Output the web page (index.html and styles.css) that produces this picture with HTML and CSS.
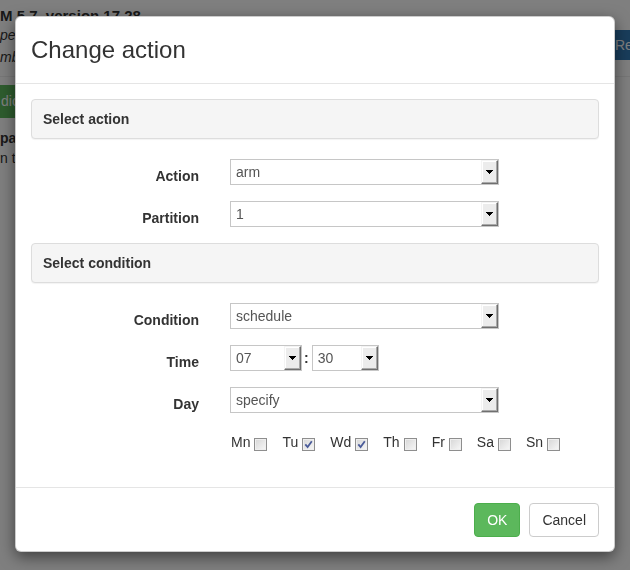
FILE: index.html
```html
<!DOCTYPE html>
<html>
<head>
<meta charset="utf-8">
<title>Change action</title>
<link rel="stylesheet" href="styles.css">
</head>
<body>
<div class="page">
  <div class="topbar">
    <div class="info">
      <div class="ver">M 5.7, version 17.28</div>
      <div class="it">per</div>
      <div class="it">mb</div>
    </div>
    <div class="refresh">Re</div>
  </div>
  <hr class="sep">
  <div class="greenbtn">dic</div>
  <div class="pa">pa</div>
  <div class="nt">n t</div>
</div>

<div class="backdrop"></div>

<div class="modal">
  <div class="modal-header">
    <h4 class="modal-title">Change action</h4>
  </div>
  <div class="modal-body">
    <div class="panel">Select action</div>

    <div class="form-row">
      <div class="label">Action</div>
      <div class="select"><span class="val">arm</span><span class="dd"><svg width="7" height="4" viewBox="0 0 7 4" shape-rendering="crispEdges"><rect x="0" y="0" width="7" height="1"/><rect x="1" y="1" width="5" height="1"/><rect x="2" y="2" width="3" height="1"/><rect x="3" y="3" width="1" height="1"/></svg></span></div>
    </div>
    <div class="form-row">
      <div class="label">Partition</div>
      <div class="select"><span class="val">1</span><span class="dd"><svg width="7" height="4" viewBox="0 0 7 4" shape-rendering="crispEdges"><rect x="0" y="0" width="7" height="1"/><rect x="1" y="1" width="5" height="1"/><rect x="2" y="2" width="3" height="1"/><rect x="3" y="3" width="1" height="1"/></svg></span></div>
    </div>

    <div class="panel">Select condition</div>

    <div class="form-row">
      <div class="label">Condition</div>
      <div class="select"><span class="val">schedule</span><span class="dd"><svg width="7" height="4" viewBox="0 0 7 4" shape-rendering="crispEdges"><rect x="0" y="0" width="7" height="1"/><rect x="1" y="1" width="5" height="1"/><rect x="2" y="2" width="3" height="1"/><rect x="3" y="3" width="1" height="1"/></svg></span></div>
    </div>
    <div class="form-row">
      <div class="label">Time</div>
      <div class="time">
        <div class="select w07"><span class="val">07</span><span class="dd"><svg width="7" height="4" viewBox="0 0 7 4" shape-rendering="crispEdges"><rect x="0" y="0" width="7" height="1"/><rect x="1" y="1" width="5" height="1"/><rect x="2" y="2" width="3" height="1"/><rect x="3" y="3" width="1" height="1"/></svg></span></div>
        <span class="colon">:</span>
        <div class="select w30"><span class="val">30</span><span class="dd"><svg width="7" height="4" viewBox="0 0 7 4" shape-rendering="crispEdges"><rect x="0" y="0" width="7" height="1"/><rect x="1" y="1" width="5" height="1"/><rect x="2" y="2" width="3" height="1"/><rect x="3" y="3" width="1" height="1"/></svg></span></div>
      </div>
    </div>
    <div class="form-row">
      <div class="label">Day</div>
      <div class="select"><span class="val">specify</span><span class="dd"><svg width="7" height="4" viewBox="0 0 7 4" shape-rendering="crispEdges"><rect x="0" y="0" width="7" height="1"/><rect x="1" y="1" width="5" height="1"/><rect x="2" y="2" width="3" height="1"/><rect x="3" y="3" width="1" height="1"/></svg></span></div>
    </div>

    <div class="days">
      <div class="day">Mn<span class="cb"></span></div>
      <div class="day">Tu<span class="cb"><svg width="11" height="11" viewBox="0 0 11 11"><path d="M2.3 5.3 L4.6 8 L8.8 2.3" fill="none" stroke="#4a5b99" stroke-width="1.8"/></svg></span></div>
      <div class="day">Wd<span class="cb"><svg width="11" height="11" viewBox="0 0 11 11"><path d="M2.3 5.3 L4.6 8 L8.8 2.3" fill="none" stroke="#4a5b99" stroke-width="1.8"/></svg></span></div>
      <div class="day">Th<span class="cb"></span></div>
      <div class="day">Fr<span class="cb"></span></div>
      <div class="day">Sa<span class="cb"></span></div>
      <div class="day">Sn<span class="cb"></span></div>
    </div>
  </div>
  <div class="modal-footer">
    <button class="btn btn-ok">OK</button>
    <button class="btn btn-cancel">Cancel</button>
  </div>
</div>
</body>
</html>
```

FILE: styles.css
```css
html, body {
  margin: 0;
  padding: 0;
}
body {
  width: 630px;
  height: 570px;
  overflow: hidden;
  background: #fff;
  color: #333;
  font-family: "Liberation Sans", Arial, sans-serif;
  font-size: 14px;
  position: relative;
}

/* background page */
.page {
  width: 630px;
  padding-top: 7px;
}
.topbar {
  display: flex;
  align-items: flex-start;
}
.info {
  width: 612px;
}
.ver {
  font-weight: bold;
  font-size: 15px;
  line-height: 17px;
}
.it {
  font-style: italic;
  line-height: 22px;
}
.refresh {
  margin-top: 23px;
  background: #337ab7;
  color: #fff;
  height: 30px;
  line-height: 30px;
  padding: 0 0 0 3px;
  width: 15px;
  overflow: hidden;
  white-space: nowrap;
  border-radius: 3px 0 0 3px;
}
.sep {
  border: 0;
  border-top: 1px solid #eee;
  margin: 8px 0;
}
.greenbtn {
  width: 16px;
  overflow: hidden;
  white-space: nowrap;
  background: #5cb85c;
  color: #fff;
  height: 33px;
  line-height: 33px;
  padding: 0 0 0 1px;
}
.pa {
  font-weight: bold;
  margin-top: 10px;
  line-height: 20px;
}
.nt {
  line-height: 20px;
}

.backdrop {
  position: fixed;
  inset: 0;
  background: rgba(0, 0, 0, 0.5);
}

/* modal */
.modal {
  position: absolute;
  left: 15px;
  top: 16px;
  width: 600px;
  box-sizing: border-box;
  background: #fff;
  border: 1px solid rgba(0, 0, 0, 0.2);
  border-radius: 6px;
  box-shadow: 0 5px 15px rgba(0, 0, 0, 0.5);
}
.modal-header {
  padding: 15px;
  border-bottom: 1px solid #e5e5e5;
}
.modal-title {
  margin: 0;
  font-size: 24px;
  line-height: 36px;
  font-weight: normal;
  color: #333;
}
.modal-body {
  padding: 15px;
}
.panel {
  background: #f5f5f5;
  border: 1px solid #ddd;
  border-radius: 4px;
  padding: 9px 11px;
  font-weight: bold;
  line-height: 20px;
  margin-bottom: 20px;
  box-shadow: 0 1px 1px rgba(0, 0, 0, 0.05);
}
.form-row {
  display: grid;
  grid-template-columns: 168px 269px;
  column-gap: 31px;
  margin-bottom: 16px;
}
.label {
  text-align: right;
  font-weight: bold;
  padding-top: 9px;
  line-height: 17px;
}
.select {
  height: 26px;
  box-sizing: border-box;
  border: 1px solid #c6c6c6;
  background: #fff;
  color: #555;
  display: flex;
  align-items: stretch;
}
.select .val {
  flex: 1;
  padding-left: 5px;
  line-height: 24px;
  white-space: nowrap;
}
.select .dd {
  width: 17px;
  box-sizing: border-box;
  background: #ececec;
  border: 1px solid;
  border-color: #f4f4f4 #6f6f6f #6f6f6f #f4f4f4;
  box-shadow: inset -1px -1px 0 #a9a9a9, inset 1px 1px 0 #fff;
  display: flex;
  align-items: center;
  justify-content: center;
}
.select .dd svg {
  display: block;
  fill: #000;
}
.time {
  display: flex;
  align-items: center;
}
.select.w07 {
  width: 72px;
}
.select.w30 {
  width: 67px;
}
.colon {
  font-weight: bold;
  padding: 0 3px 0 2px;
  line-height: 20px;
}
.days {
  display: flex;
  gap: 15px;
  margin-left: 200px;
  padding-top: 3px;
  margin-bottom: 20px;
  line-height: 20px;
  color: #333;
}
.cb {
  display: inline-block;
  width: 13px;
  height: 13px;
  box-sizing: border-box;
  margin-left: 4px;
  vertical-align: -4px;
  border: 1px solid #8e8e8e;
  background: linear-gradient(135deg, #d6d6d6 0%, #f8f8f8 100%);
  box-shadow: inset 0 0 0 1px #efefef;
}
.cb svg {
  display: block;
}
.modal-footer {
  border-top: 1px solid #e5e5e5;
  padding: 15px 15px 14px;
  display: flex;
  justify-content: flex-end;
  gap: 9px;
}
.btn {
  font-family: "Liberation Sans", Arial, sans-serif;
  font-size: 14px;
  line-height: 20px;
  padding: 6px 12px;
  border: 1px solid;
  border-radius: 4px;
  margin: 0;
}
.btn-ok {
  background: #5cb85c;
  border-color: #4cae4c;
  color: #fff;
}
.btn-cancel {
  background: #fff;
  border-color: #ccc;
  color: #333;
}
```
